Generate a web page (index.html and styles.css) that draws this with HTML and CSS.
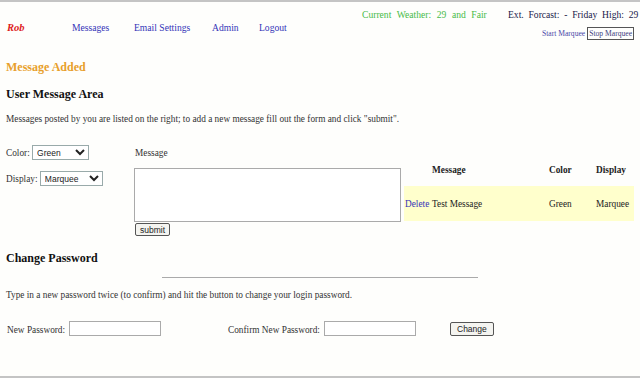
FILE: index.html
```html
<!DOCTYPE html>
<html lang="en">
<head>
    <meta charset="UTF-8">
    <title>User Message Area</title>
    <link rel="stylesheet" href="styles.css">
</head>
<body>
<div class="page">
    <header class="top">
        <div class="nav">
            <span class="user">Rob</span>
            <a href="#" class="link-messages">Messages</a>
            <a href="#" class="link-email">Email Settings</a>
            <a href="#" class="link-admin">Admin</a>
            <a href="#" class="link-logout">Logout</a>
        </div>
        <div class="side">
            <div class="weather">
                <span class="current">Current Weather: 29 and Fair</span>
                <span class="forecast">Ext. Forcast: - Friday High: 29</span>
            </div>
            <div class="marquee-ctl">
                <span class="start">Start Marquee</span>
                <span class="stop">Stop Marquee</span>
            </div>
        </div>
    </header>

    <div class="notice">Message Added</div>
    <h2>User Message Area</h2>
    <p class="intro">Messages posted by you are listed on the right; to add a new message fill out the form and click "submit".</p>

    <div class="msg-area">
        <div class="opts">
            <label class="opt">Color: <select class="sel-color"><option>Green</option></select></label>
            <label class="opt">Display: <select class="sel-display"><option>Marquee</option></select></label>
        </div>
        <div class="compose">
            <div class="compose-label">Message</div>
            <textarea></textarea>
            <button class="btn">submit</button>
        </div>
        <table class="messages">
            <tr>
                <th class="c-del"></th>
                <th class="c-msg">Message</th>
                <th class="c-color">Color</th>
                <th class="c-disp">Display</th>
            </tr>
            <tr class="row">
                <td class="c-del"><a href="#">Delete</a></td>
                <td>Test Message</td>
                <td>Green</td>
                <td>Marquee</td>
            </tr>
        </table>
    </div>

    <h2 class="pw-title">Change Password</h2>
    <hr>
    <p class="intro pw-intro">Type in a new password twice (to confirm) and hit the button to change your login password.</p>

    <div class="pw-row">
        <label class="pw1">New Password: <input type="password"></label>
        <label class="pw2">Confirm New Password: <input type="password"></label>
        <button class="btn btn-change">Change</button>
    </div>
</div>
</body>
</html>
```

FILE: styles.css
```css
* { margin: 0; padding: 0; box-sizing: border-box; }
body {
    font-family: "Liberation Serif", "Times New Roman", serif;
    font-size: 9.3px;
    color: #222;
    background: #fff;
}
.page {
    height: 378px;
    border-top: 2px solid #c4c4c4;
    border-bottom: 2px solid #c4c4c4;
    background: #fefefc;
    overflow: hidden;
}
a { color: #3434b8; text-decoration: none; }

/* header */
.top { display: flex; height: 48px; }
.nav {
    display: flex;
    flex-shrink: 0;
    align-items: baseline;
    padding: 20px 0 0 7px;
    font-size: 9.6px;
    width: 355px;
}
.user { color: #dd2020; font-weight: bold; font-style: italic; font-size: 10.5px; width: 65px; }
.link-messages { width: 62px; }
.link-email { width: 78px; }
.link-admin { width: 47px; }
.side { flex: 1; min-width: 0; padding-top: 7px; }
.weather { display: flex; font-size: 9.6px; word-spacing: 3.2px; white-space: nowrap; }
.current { color: #48bb48; margin-left: 7px; width: 146px; flex-shrink: 0; }
.forecast { color: #20204a; word-spacing: 2.4px; }
.marquee-ctl { display: flex; justify-content: flex-end; align-items: center; font-size: 7.6px; color: #4848a8; margin-top: 7px; padding-right: 6px; gap: 2px; }
.stop { border: 1px solid #555; padding: 1px 1px; color: #404080; }

.notice { color: #e8a02c; font-weight: bold; font-size: 12px; padding: 10px 0 0 6px; }
h2 { font-size: 12px; font-weight: bold; color: #111; padding: 12px 0 0 6px; }
.intro { color: #333; padding: 12px 0 0 6px; }

/* message form + table */
.msg-area { display: flex; padding-top: 21px; }
.opts { width: 134px; padding-left: 6px; display: flex; flex-direction: column; gap: 11px; }
.opt { color: #333; }
select {
    font-family: "Liberation Sans", Arial, sans-serif;
    font-size: 8.5px;
    height: 15px;
    border: 1px solid #9aa;
    background: #fff;
    color: #222;
}
.sel-color { width: 57px; }
.sel-display { width: 63px; }
.compose { width: 270px; }
.compose-label { color: #333; height: 23px; padding: 3px 0 0 1px; }
textarea {
    display: block;
    width: 267px;
    height: 54px;
    border: 1px solid #aaa;
    resize: none;
    background: #fff;
}
.btn {
    font-family: "Liberation Sans", Arial, sans-serif;
    font-size: 8.5px;
    padding: 0 4px;
    height: 13px;
    margin: 1px 0 0 1px;
    border: 1px solid #555;
    border-radius: 2px;
    background: #f4f4f0;
    color: #222;
}
.messages { border-collapse: collapse; margin-top: 8px; align-self: flex-start; }
.messages th { font-weight: bold; color: #222; height: 33px; text-align: left; padding: 0; }
.messages td { padding: 0; height: 35px; }
.row { background: #ffffcc; }
.c-del { width: 28px; padding-left: 1px !important; }
.c-msg { width: 117px; }
.c-color { width: 47px; }
.c-disp { width: 38px; }

/* password */
.pw-title { padding-top: 15px; }
hr { width: 316px; margin: 11px 0 0 162px; border: none; border-top: 1px solid #aaa; height: 0; }
.pw-intro { padding-top: 12px; }
.pw-row { display: flex; align-items: center; padding: 21px 0 0 7px; color: #333; }
input {
    width: 92px;
    height: 15px;
    margin-left: 2px;
    border: 1px solid #aaa;
    background: #fff;
}
.pw1 { width: 221px; }
.pw2 { width: 222px; }
.btn-change { height: 14px; padding: 0 6px; margin-left: 0; }
```
